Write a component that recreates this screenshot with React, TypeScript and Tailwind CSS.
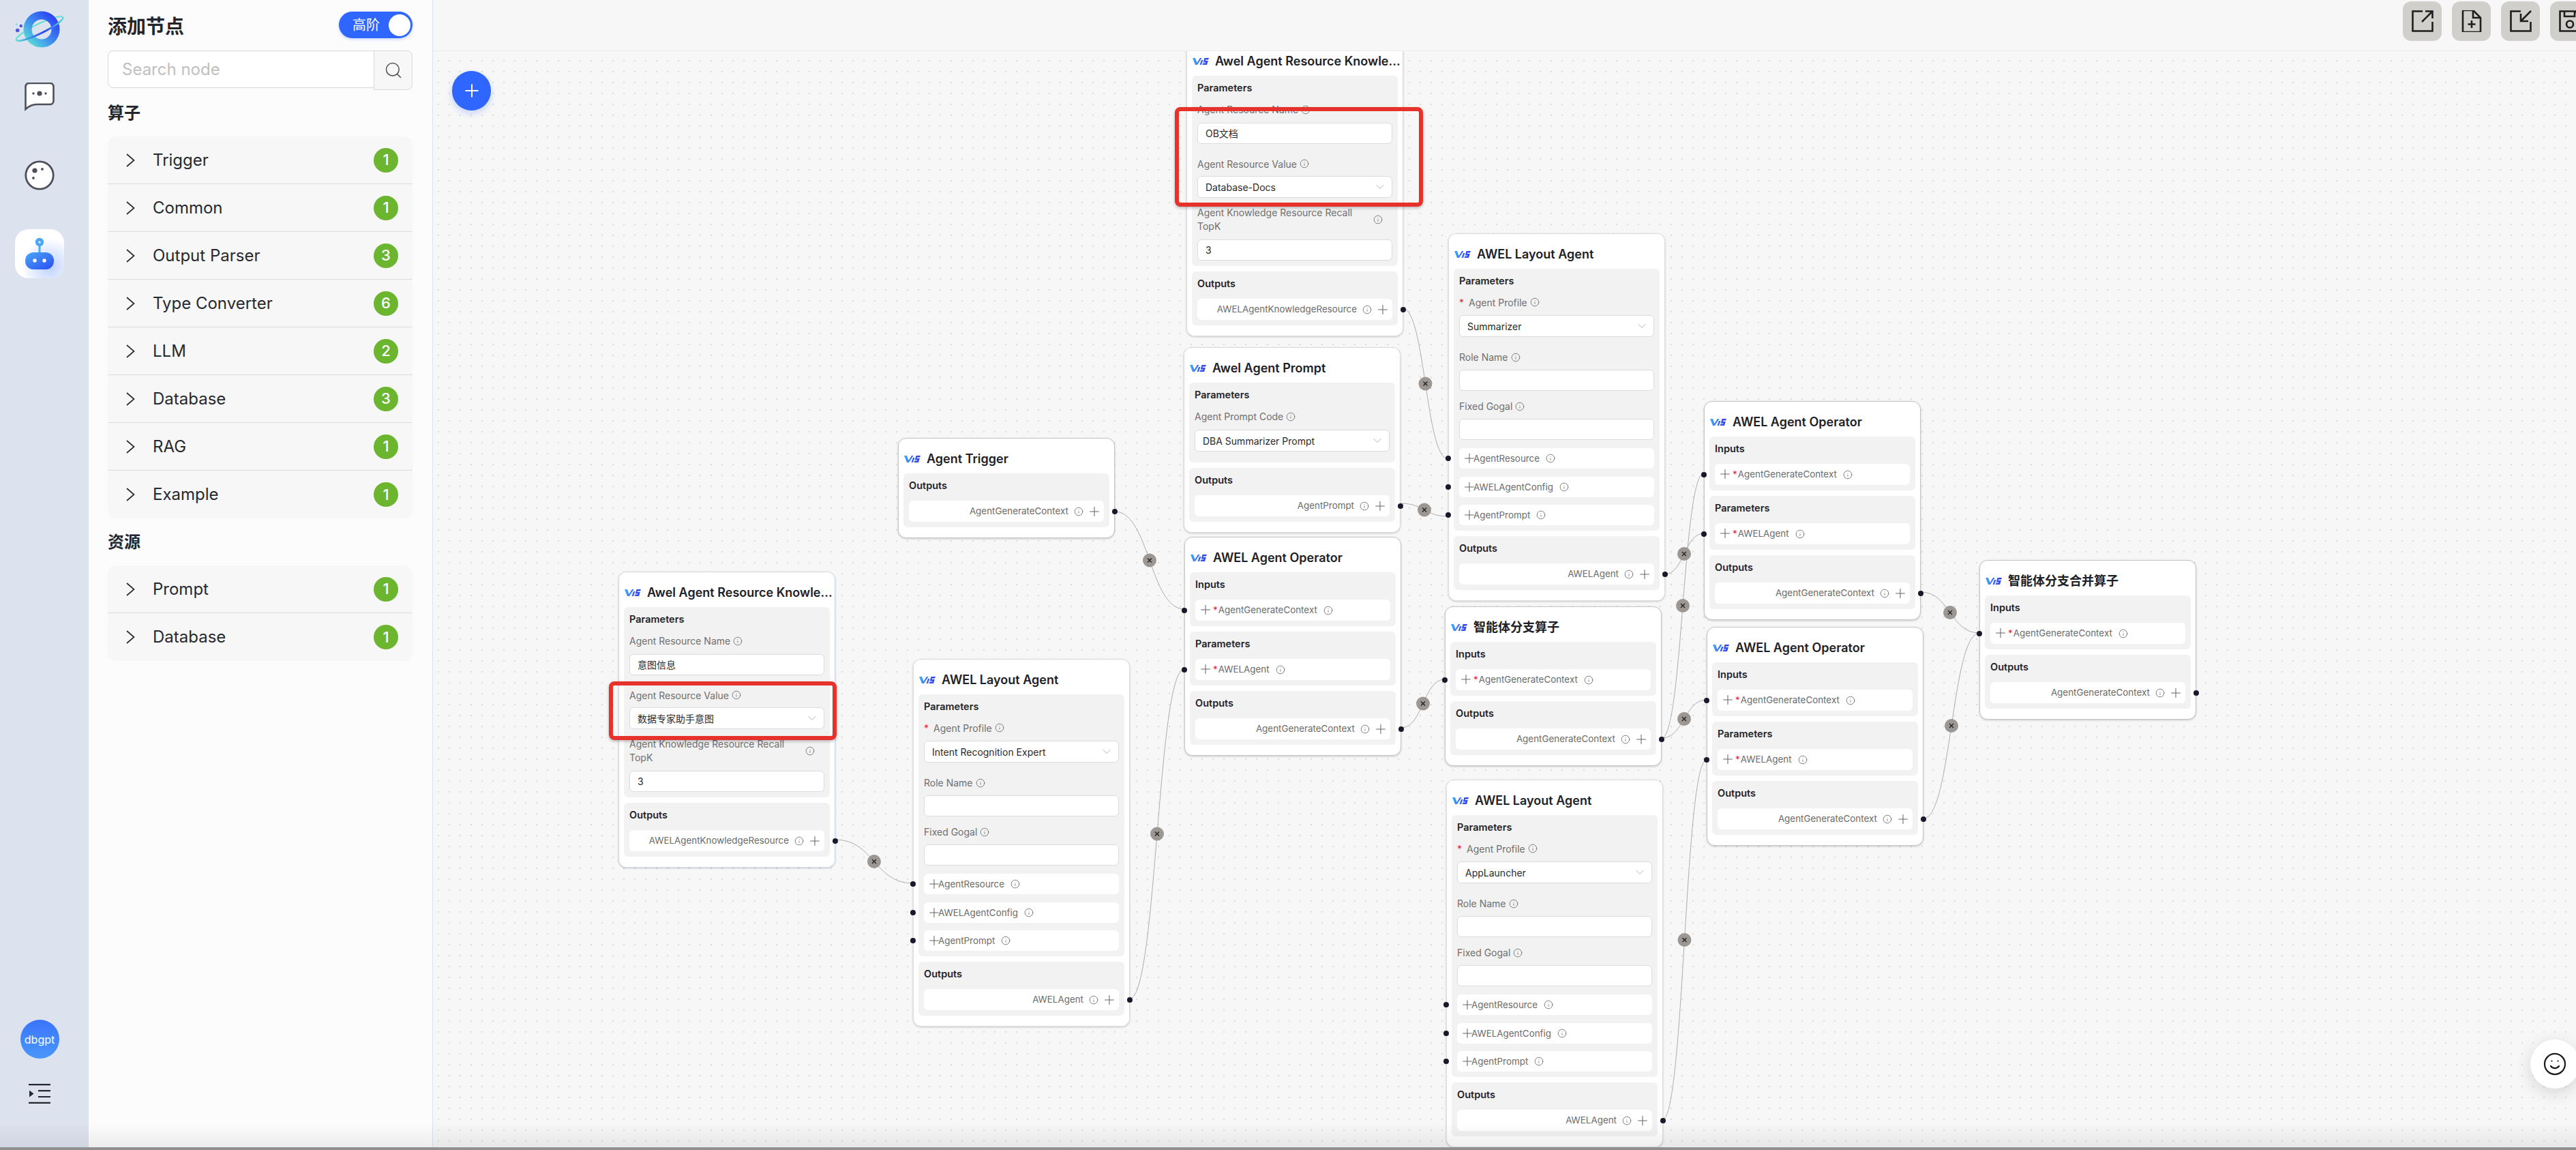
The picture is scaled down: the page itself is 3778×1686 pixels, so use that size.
import { ChevronDown, Info, Plus, Search, Smile } from "lucide-react";
import type { ReactNode } from "react";

const operators = [
  { name: "Trigger", count: 1 },
  { name: "Common", count: 1 },
  { name: "Output Parser", count: 3 },
  { name: "Type Converter", count: 6 },
  { name: "LLM", count: 2 },
  { name: "Database", count: 3 },
  { name: "RAG", count: 1 },
  { name: "Example", count: 1 },
];

const resources = [
  { name: "Prompt", count: 1 },
  { name: "Database", count: 1 },
];

// edges in page coordinates, same as the viewBox of the svg below
const edges = [
  [1225, 1231, 1339, 1295],
  [1635, 750, 1737, 893],
  [1657, 1464, 1737, 981],
  [2055, 1067, 2119, 996],
  [2057, 452, 2124, 673],
  [2054, 738, 2124, 757],
  [2441, 842, 2499, 782],
  [2437, 1082, 2499, 694],
  [2437, 1082, 2503, 1026],
  [2438, 1642, 2503, 1114],
  [2817, 868, 2903, 928],
  [2821, 1200, 2903, 928],
];

const VisLogo = () => (
  <svg width="24" height="12" viewBox="0 0 24 12" className="shrink-0">
    <defs>
      <linearGradient id="vis" x1="0" y1="0" x2="1" y2="0">
        <stop offset="0" stopColor="#3fb0f8" />
        <stop offset="0.5" stopColor="#3a63f5" />
        <stop offset="1" stopColor="#2f3ff0" />
      </linearGradient>
    </defs>
    <path
      d="M0 1h4l2.5 7L11 1h2.5L7 11H4zM13 4h2.5L13 11h-2.5zM17.5 1H24l-1 2.5h-3.8l-.6 1.5h4.2L21 11h-6.5l1-2.5h3.7l.4-1h-3.8z"
      fill="url(#vis)"
    />
  </svg>
);

const InfoIcon = () => (
  <Info size={14} strokeWidth={1.4} className="shrink-0 text-[#6b6b6b]" />
);

const Cross = () => (
  <Plus size={22} strokeWidth={1.15} className="-mx-[4.5px] -my-1 shrink-0 text-[#666666]" />
);

const Handle = ({ side }: { side: "left" | "right" }) => (
  <span
    className={
      side === "left"
        ? "absolute top-1/2 -left-[20px] h-2 w-2 -translate-y-1/2 rounded-full bg-[#1a192b]"
        : "absolute top-1/2 -right-[20px] h-2 w-2 -translate-y-1/2 rounded-full bg-[#1a192b]"
    }
  />
);

const Node = ({
  title,
  place,
  border = "border-solid border-[#c6c6c6]",
  children,
}: {
  title: string;
  place: string;
  border?: string;
  children: ReactNode;
}) => (
  <div
    className={`absolute ${place} flex w-[318px] flex-col gap-2 rounded-xl border bg-white px-[7px] pb-[15px] shadow-[0_1px_3px_rgba(0,0,0,0.2)] ${border}`}
  >
    <div className="-mb-2 flex h-[51px] items-center gap-[9px] pt-2 pl-px">
      <VisLogo />
      <span className="text-[18px] font-semibold whitespace-nowrap text-[#1c2129]">{title}</span>
    </div>
    {children}
  </div>
);

const Section = ({
  title,
  children,
}: {
  title: string;
  children: ReactNode;
}) => (
  <div className="rounded-md bg-[#f2f2f2] px-2 pb-2">
    <div className="flex h-[30px] items-end text-[14.5px] leading-6 font-semibold text-[#1f2329]">
      {title}
    </div>
    {children}
  </div>
);

const InRow = ({ name }: { name: string }) => (
  <div className="relative mt-[10px] flex h-[31px] items-center gap-[9px] rounded-md bg-white pl-2 text-[13.4px] text-[#6b6b6b]">
    <Handle side="left" />
    <span className="flex items-center">
      <Cross />
      <span className="mr-px ml-[5px] text-[#e0282e]">*</span>
      {name}
    </span>
    <InfoIcon />
  </div>
);

const ResourceRow = ({ name, className }: { name: string; className: string }) => (
  <div
    className={`relative flex h-[30px] items-center gap-[9px] rounded-md bg-white pl-2 text-[13.4px] text-[#6b6b6b] ${className}`}
  >
    <Handle side="left" />
    <span className="flex items-center">
      <Cross />
      {name}
    </span>
    <InfoIcon />
  </div>
);

const OutRow = ({ name }: { name: string }) => (
  <div className="relative mt-[10px] flex h-[31px] items-center justify-end gap-2 rounded-md bg-white pr-2 text-[13.4px] text-[#6b6b6b]">
    {name}
    <InfoIcon />
    <span className="ml-px flex">
      <Cross />
    </span>
    <Handle side="right" />
  </div>
);

const Label = ({
  text,
  required,
  className,
}: {
  text: string;
  required?: boolean;
  className: string;
}) => (
  <div className={`flex items-center gap-1 text-[14px] text-[#6f6f6f] ${className}`}>
    {required && <span className="mr-[3px] text-[#e0282e]">*</span>}
    {text}
    <InfoIcon />
  </div>
);

const TextBox = ({ value }: { value?: string }) => (
  <div className="flex h-[31px] items-center rounded-md border border-[#dcdcdc] bg-white pl-[11px] text-[14px] text-[#2a2a2a]">
    {value}
  </div>
);

const SelectBox = ({ value }: { value: string }) => (
  <div className="flex h-[32px] items-center justify-between rounded-md border border-[#dcdcdc] bg-white pr-[7px] pl-[11px] text-[14px] text-[#2a2a2a]">
    {value}
    <ChevronDown size={20} strokeWidth={0.9} className="text-[#9a9a9a]" />
  </div>
);

const ResourceNode = ({
  place,
  border,
  name,
  value,
}: {
  place: string;
  border: string;
  name: string;
  value: string;
}) => (
  <Node title="Awel Agent Resource Knowle..." place={place} border={border}>
    <Section title="Parameters">
      <Label text="Agent Resource Name" className="h-[39px]" />
      <TextBox value={name} />
      <Label text="Agent Resource Value" className="mt-[11px] h-[36px]" />
      <SelectBox value={value} />
      <div className="mt-[3px] flex h-[58px] items-center gap-[22px] text-[14px] leading-5 text-[#6f6f6f]">
        <span className="w-[236px]">Agent Knowledge Resource Recall TopK</span>
        <InfoIcon />
      </div>
      <TextBox value="3" />
    </Section>
    <Section title="Outputs">
      <OutRow name="AWELAgentKnowledgeResource" />
    </Section>
  </Node>
);

const LayoutNode = ({
  place,
  border,
  profile,
}: {
  place: string;
  border: string;
  profile: string;
}) => (
  <Node title="AWEL Layout Agent" place={place} border={border}>
    <Section title="Parameters">
      <Label text="Agent Profile" required className="h-[38px]" />
      <SelectBox value={profile} />
      <Label text="Role Name" className="mt-[11px] h-[37px]" />
      <TextBox />
      <Label text="Fixed Gogal" className="mt-[4px] h-[37px]" />
      <TextBox />
      <ResourceRow name="AgentResource" className="mt-[12px]" />
      <ResourceRow name="AWELAgentConfig" className="mt-[12px]" />
      <ResourceRow name="AgentPrompt" className="mt-[11px]" />
    </Section>
    <Section title="Outputs">
      <OutRow name="AWELAgent" />
    </Section>
  </Node>
);

const OperatorNode = ({ place }: { place: string }) => (
  <Node title="AWEL Agent Operator" place={place}>
    <Section title="Inputs">
      <InRow name="AgentGenerateContext" />
    </Section>
    <Section title="Parameters">
      <InRow name="AWELAgent" />
    </Section>
    <Section title="Outputs">
      <OutRow name="AgentGenerateContext" />
    </Section>
  </Node>
);

const CollapseList = ({ items }: { items: { name: string; count: number }[] }) => (
  <div className="rounded-xl bg-[#f7f7f7]">
    {items.map((item, i) => (
      <div
        key={item.name}
        className={
          i === items.length - 1
            ? "flex h-[70px] items-center pr-[21px] pl-[27px]"
            : "flex h-[70px] items-center border-b border-[#dcdcdc] pr-[21px] pl-[27px]"
        }
      >
        <svg width="13" height="20" viewBox="0 0 13 20" className="shrink-0 text-[#2b2b2b]">
          <path d="M1 1l10.5 9L1 19" fill="none" stroke="currentColor" strokeWidth="1.7" />
        </svg>
        <span className="ml-[26px] flex-1 text-[24px] text-[#262a30]">{item.name}</span>
        <span className="flex h-9 w-9 items-center justify-center rounded-full bg-[#6cb52f] text-[22px] font-medium text-white">
          {item.count}
        </span>
      </div>
    ))}
  </div>
);

const ToolButton = ({ children }: { children: ReactNode }) => (
  <div className="flex h-[58px] w-[57px] shrink-0 items-center justify-center rounded-xl bg-[#d1cfcc]">
    <svg
      width="32"
      height="32"
      viewBox="0 0 32 32"
      fill="none"
      stroke="#1e1e1e"
      strokeWidth="2.6"
    >
      {children}
    </svg>
  </div>
);

const Rail = () => (
  <div className="flex w-[130px] shrink-0 flex-col bg-[#dde2ef] pb-[68px] pl-[22px]">
    <div className="flex w-[72px] flex-1 flex-col items-center">
      <svg width="72" height="56" viewBox="0 0 72 56" className="mt-[15px] shrink-0">
        <defs>
          <linearGradient id="planet" x1="0" y1="1" x2="1" y2="0">
            <stop offset="0" stopColor="#5be0d8" />
            <stop offset="0.45" stopColor="#3f8df0" />
            <stop offset="1" stopColor="#2a3cf5" />
          </linearGradient>
          <linearGradient id="orbit" x1="0" y1="0" x2="1" y2="0">
            <stop offset="0" stopColor="#5be0d8" />
            <stop offset="0.6" stopColor="#2a3cf5" />
            <stop offset="1" stopColor="#5be0d8" />
          </linearGradient>
        </defs>
        <ellipse
          cx="36"
          cy="27"
          rx="38"
          ry="7"
          transform="rotate(-26 36 27)"
          fill="none"
          stroke="#5be0d8"
          strokeWidth="2"
        />
        <circle cx="39" cy="28" r="20.5" fill="none" stroke="url(#planet)" strokeWidth="12" />
        <path
          d="M1.8 43.7A38 7 -26 0 0 70.2 10.3"
          fill="none"
          stroke="url(#orbit)"
          strokeWidth="2.6"
        />
        <circle cx="3.7" cy="29.5" r="2.8" fill="#4a55f0" />
        <circle cx="8.7" cy="23" r="2.2" fill="#3f55ee" />
        <circle cx="2.3" cy="20.5" r="1.2" fill="#5fd8f0" />
      </svg>
      <svg width="44" height="42" viewBox="0 0 44 42" className="mt-[50px] shrink-0">
        <path
          d="M1.5 39V6a5 5 0 0 1 5-5h31a5 5 0 0 1 5 5v21a5 5 0 0 1-5 5H18C12 32 6 35 1.5 39Z"
          fill="#fff"
          stroke="#4d5058"
          strokeWidth="2.6"
        />
        <circle cx="22" cy="16" r="3.6" fill="#4d5058" />
        <circle cx="13" cy="16" r="1.7" fill="#4d5058" />
        <circle cx="31" cy="16" r="1.7" fill="#4d5058" />
      </svg>
      <svg width="44" height="44" viewBox="0 0 44 44" className="mt-[72px] shrink-0">
        <circle cx="22" cy="22" r="20.2" fill="#fff" stroke="#4d5058" strokeWidth="2.8" />
        <circle cx="15" cy="15" r="3.6" fill="#4d5058" />
        <circle cx="26" cy="13" r="1.9" fill="#4d5058" />
        <circle cx="13" cy="26" r="1.9" fill="#4d5058" />
      </svg>
      <div className="mt-[57px] flex h-[72px] w-[72px] shrink-0 items-center justify-center rounded-[20px] bg-[radial-gradient(circle_at_70%_75%,#bcd0ff_0%,#ffffff_55%)]">
        <svg width="44" height="48" viewBox="0 0 44 48">
          <defs>
            <linearGradient id="robot" x1="0" y1="0" x2="1" y2="1">
              <stop offset="0" stopColor="#4aa8f5" />
              <stop offset="1" stopColor="#2a4cf5" />
            </linearGradient>
          </defs>
          <rect x="20.5" y="10" width="3" height="14" fill="#4aa8f5" />
          <circle cx="22" cy="7" r="6.2" fill="#4aa8f5" />
          <circle cx="22" cy="7" r="1.6" fill="#fff" />
          <rect x="1" y="22" width="42" height="25" rx="12" fill="url(#robot)" />
          <circle cx="15" cy="34" r="2.7" fill="#fff" />
          <circle cx="29" cy="34" r="2.7" fill="#fff" />
        </svg>
      </div>
      <div className="mt-auto flex h-[57px] w-[57px] shrink-0 items-center justify-center rounded-full bg-linear-to-b from-[#3b74fa] to-[#4a97fb] text-[16px] text-white">
        dbgpt
      </div>
      <svg width="32" height="29" viewBox="0 0 32 29" className="mt-[37px] shrink-0">
        <path d="M0 1.2h32M14 10.2h18M14 19h18M0 27.8h32" stroke="#24272c" strokeWidth="2.2" />
        <path d="M1 9.5v10l6.5-5z" fill="#24272c" />
      </svg>
    </div>
  </div>
);

const Panel = () => (
  <div className="flex w-[505px] shrink-0 flex-col border-r border-[#d8e2ef] bg-[#fcfcfc] pr-[29px] pl-[28px]">
    <div className="flex h-[74px] items-start justify-between pt-[17px]">
      <span className="mt-px text-[28px] leading-[42px] font-semibold text-[#22262c]">添加节点</span>
      <div className="relative flex h-[39px] w-[108px] items-center rounded-full bg-[#2f66ff] pl-5 text-[20px] text-white shadow-[0_2px_4px_rgba(47,102,255,0.25)]">
        高阶
        <span className="absolute top-[3.5px] right-[3px] h-8 w-8 rounded-full bg-white" />
      </div>
    </div>
    <div className="flex items-start">
      <div className="flex h-[55px] flex-1 items-center rounded-l-lg border border-[#d9d9d9] bg-white pl-5 text-[24px] text-[#bfbfbf]">
        Search node
      </div>
      <div className="-ml-px flex h-[58px] w-[57px] items-center justify-center rounded-r-lg border border-[#d9d9d9] bg-[#f7f7f7] text-[#5a5a5a]">
        <Search size={28} strokeWidth={1.4} />
      </div>
    </div>
    <div className="mt-[16px] mb-[16px] h-9 text-[24px] leading-9 font-semibold text-[#22262c]">
      算子
    </div>
    <CollapseList items={operators} />
    <div className="mt-[17px] mb-[16px] h-9 text-[24px] leading-9 font-semibold text-[#22262c]">
      资源
    </div>
    <CollapseList items={resources} />
  </div>
);

export default function App() {
  return (
    <div className="relative flex h-[1686px] w-[3778px] overflow-hidden bg-[#f7f7f7] font-[Inter,'Noto_Sans_CJK_SC',sans-serif]">
      <Rail />
      <Panel />

      <div className="flex min-w-0 flex-1 flex-col">
        {/* toolbar runs past the right edge of the window */}
        <div className="z-10 -mr-[19px] flex h-[75px] shrink-0 justify-end gap-[15px] border-b border-[#ebebeb] bg-[#f7f7f7] pt-[2px]">
          <ToolButton>
            <path d="M16 1.5H1.5v29h29V17" />
            <path d="M15 17 30 2M20 1.5h10.5V12" />
          </ToolButton>
          <ToolButton>
            <path d="M18 0H5a2 2 0 0 0-2 2v30h26V11Z" />
            <path d="M18 0v11h11M16 15v11M10.5 20.5h11" />
          </ToolButton>
          <ToolButton>
            <path d="M16 1.5H1.5v29h29V17" />
            <path d="M31 1 17 15M16 5v11h11" />
          </ToolButton>
          <ToolButton>
            <path d="M1.5 1.5H24l6.5 6.5v22.5h-29Z" />
            <path d="M8 1.5V9h15V1.5" />
            <circle cx="16" cy="20.5" r="5" />
          </ToolButton>
        </div>

        {/* flow canvas, nodes sit at their own coordinates */}
        <div className="relative flex-1 overflow-hidden bg-[#f7f7f7] bg-[radial-gradient(circle,#bcbcbc_0.5px,transparent_0.9px)] bg-size-[16px_16px] bg-position-[0_6px]">
          <svg
            className="absolute top-0 left-0"
            width="3143"
            height="1611"
            viewBox="635 75 3143 1611"
            fill="none"
          >
            {edges.map(([sx, sy, tx, ty]) => {
              const c = (tx - sx) / 2;
              return (
                <path
                  key={`${sx}-${sy}-${tx}-${ty}`}
                  d={`M${sx} ${sy}C${sx + c} ${sy} ${tx - c} ${ty} ${tx} ${ty}`}
                  stroke="#adadad"
                  strokeWidth="1"
                />
              );
            })}
            {edges.map(([sx, sy, tx, ty]) => {
              const x = (sx + tx) / 2;
              const y = (sy + ty) / 2;
              return (
                <g key={`${sx}-${sy}-${tx}-${ty}-label`}>
                  <circle cx={x} cy={y} r="10" fill="#9c9792" />
                  <path
                    d={`M${x - 3} ${y - 3}l6 6m0-6l-6 6`}
                    stroke="#1f1f1f"
                    strokeWidth="1.3"
                  />
                </g>
              );
            })}
          </svg>

          <div className="absolute top-[29px] left-[28px] flex h-[58px] w-[57px] items-center justify-center rounded-full bg-[#2f66ff] text-white shadow-[0_4px_10px_rgba(47,102,255,0.25)]">
            <Plus size={30} strokeWidth={1.6} />
          </div>

          <ResourceNode
            place="left-[272px] top-[763px]"
            border="border-dotted border-[#9db4f0]"
            name="意图信息"
            value="数据专家助手意图"
          />
          <ResourceNode
            place="left-[1105px] -top-[16px]"
            border="border-dotted border-[#bdbdbd]"
            name="OB文档"
            value="Database-Docs"
          />

          <Node title="Agent Trigger" place="left-[682px] top-[567px]">
            <Section title="Outputs">
              <OutRow name="AgentGenerateContext" />
            </Section>
          </Node>

          <LayoutNode
            place="left-[704px] top-[891px]"
            border="border-dotted border-[#bdbdbd]"
            profile="Intent Recognition Expert"
          />
          <LayoutNode
            place="left-[1489px] top-[267px]"
            border="border-dotted border-[#bdbdbd]"
            profile="Summarizer"
          />
          <LayoutNode
            place="left-[1486px] top-[1068px]"
            border="border-dotted border-[#bdbdbd]"
            profile="AppLauncher"
          />

          <Node
            title="Awel Agent Prompt"
            place="left-[1101px] top-[434px]"
            border="border-dotted border-[#bdbdbd]"
          >
            <Section title="Parameters">
              <Label text="Agent Prompt Code" className="h-[39px]" />
              <SelectBox value="DBA Summarizer Prompt" />
              <div className="h-[8px]" />
            </Section>
            <Section title="Outputs">
              <OutRow name="AgentPrompt" />
            </Section>
          </Node>

          <OperatorNode place="left-[1102px] top-[712px]" />

          <Node title="智能体分支算子" place="left-[1484px] top-[814px]">
            <Section title="Inputs">
              <InRow name="AgentGenerateContext" />
            </Section>
            <Section title="Outputs">
              <OutRow name="AgentGenerateContext" />
            </Section>
          </Node>

          <OperatorNode place="left-[1864px] top-[513px]" />
          <OperatorNode place="left-[1868px] top-[844px]" />

          <Node title="智能体分支合并算子" place="left-[2268px] top-[746px]">
            <Section title="Inputs">
              <InRow name="AgentGenerateContext" />
            </Section>
            <Section title="Outputs">
              <OutRow name="AgentGenerateContext" />
            </Section>
          </Node>

          {/* red call-out frames drawn over the screenshot */}
          <div className="absolute top-[924px] left-[258px] h-[86px] w-[334px] rounded-lg border-[6px] border-[#e6322a] shadow-[0_2px_4px_rgba(0,0,0,0.25)]" />
          <div className="absolute top-[82px] left-[1088px] h-[146px] w-[364px] rounded-lg border-[6px] border-[#e6322a] shadow-[0_2px_4px_rgba(0,0,0,0.25)]" />

          <div className="absolute top-[1449px] left-[3076px] flex h-[72px] w-[72px] items-center justify-center rounded-full bg-white shadow-[0_6px_24px_rgba(0,0,0,0.14)]">
            <Smile size={36} strokeWidth={1.5} className="text-[#1e1e1e]" />
          </div>
        </div>
      </div>

      {/* soft fade and the grey strip at the bottom of the capture */}
      <div className="absolute right-0 bottom-[4px] left-0 h-[36px] bg-linear-to-b from-transparent to-[#00000010]" />
      <div className="absolute right-0 bottom-0 left-0 h-[4px] bg-[#8f8f8f]" />
    </div>
  );
}
